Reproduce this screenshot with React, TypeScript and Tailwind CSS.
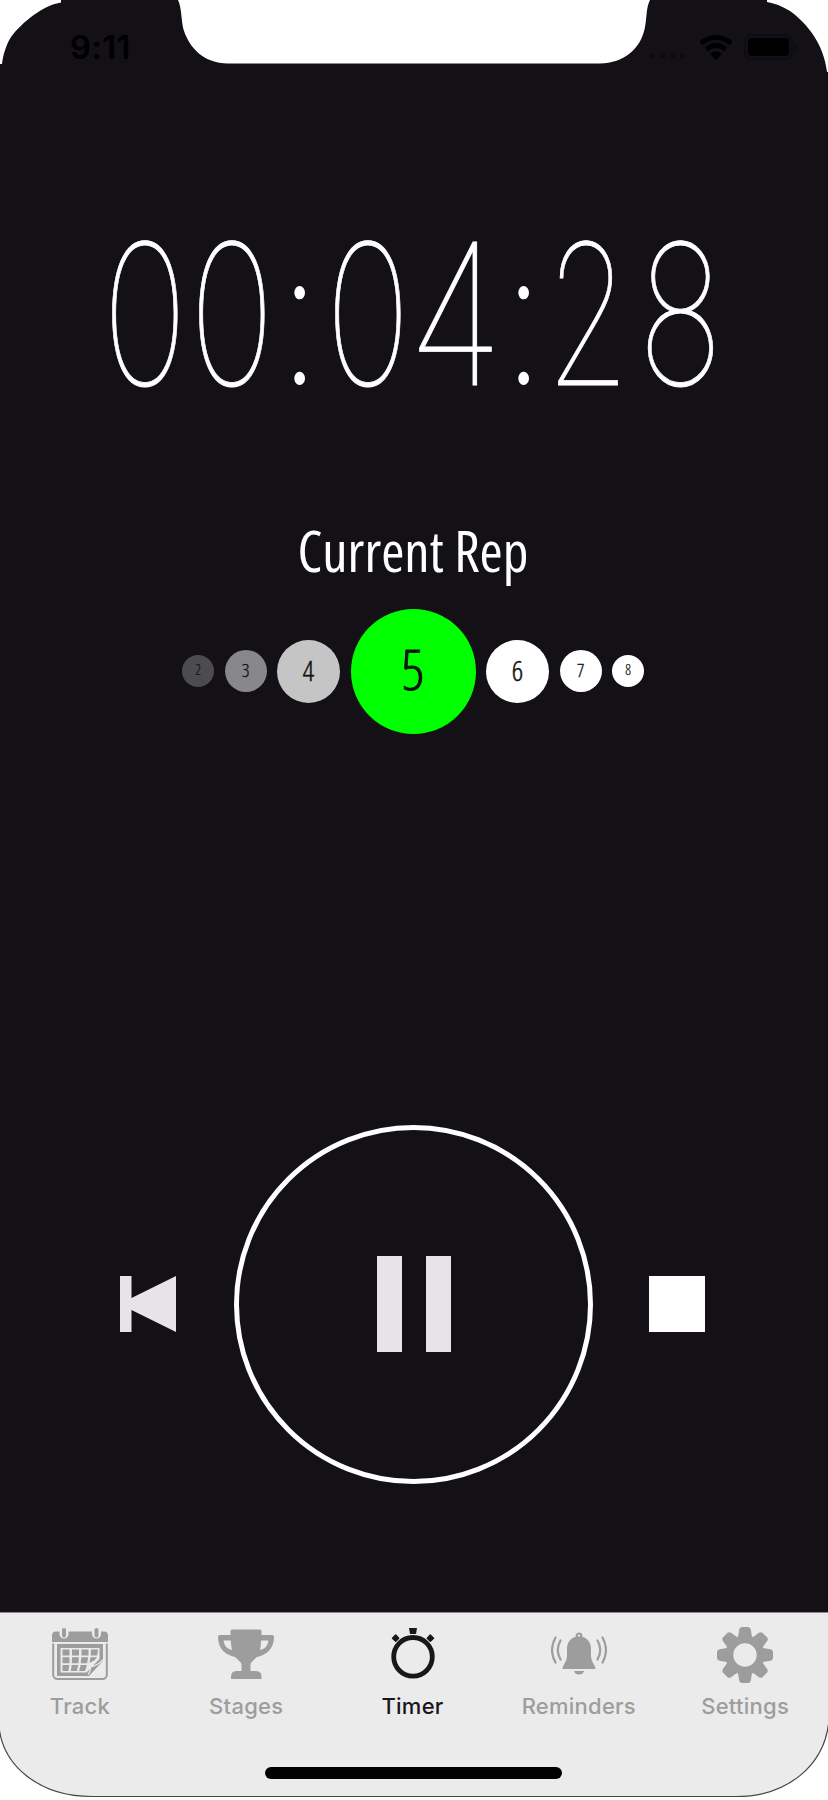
import type { ReactNode } from "react";

const clock: { char: string; slot: string; glyph: string }[] = [
  { char: "0", slot: "w-[87px]", glyph: "scale-x-[0.74]" },
  { char: "0", slot: "w-[87px]", glyph: "scale-x-[0.74]" },
  { char: ":", slot: "w-[49px]", glyph: "scale-x-[0.8]" },
  { char: "0", slot: "w-[87px]", glyph: "scale-x-[0.74]" },
  { char: "4", slot: "w-[87px]", glyph: "scale-x-[0.82]" },
  { char: ":", slot: "w-[51px]", glyph: "scale-x-[0.8]" },
  { char: "2", slot: "w-[76px]", glyph: "scale-x-[0.69]" },
  { char: "8", slot: "w-[98px] pl-[11px]", glyph: "scale-x-[0.73]" },
];

const reps = [
  { n: 2, cls: "size-8 text-[14px] bg-[#4c4b4e]" },
  { n: 3, cls: "size-[42px] text-[19px] bg-[#888789]" },
  { n: 4, cls: "size-[63px] text-[28px] bg-[#c5c5c6]" },
  { n: 5, cls: "size-[125px] text-[56px] bg-[#00ff00]" },
  { n: 6, cls: "size-[63px] text-[28px] bg-white" },
  { n: 7, cls: "size-[42px] text-[19px] bg-white" },
  { n: 8, cls: "size-8 text-[14px] bg-white" },
];

function CalendarIcon() {
  return (
    <svg viewBox="0 0 56 56" className="size-14" fill="currentColor">
      <path d="M0 14V7.500a4 4 0 0 1 4-4H7.500V6a4.500 4.500 0 0 0 9 0V3.500H40V6a4.500 4.500 0 0 0 9 0V3.500H52a4 4 0 0 1 4 4v6.500Z" />
      <rect x="10" y="0" width="4" height="9.500" rx="2" />
      <rect x="42.500" y="0" width="4" height="9.500" rx="2" />
      <path d="M1.200 15.500V46.500a4.500 4.500 0 0 0 4.500 4.500H50.300a4.500 4.500 0 0 0 4.500-4.500V15.500" fill="none" stroke="currentColor" strokeWidth="2" />
      <path fillRule="evenodd" d="M5 16H51V33L37 48H5ZM8.500 20V44.500H34.500L47.500 31V20Z" />
      <path d="M10.500 21.500h7v6h-7zM20 21.500h7v6h-7zM29.500 21.500h7v6h-7zM39 21.500h7l-.8 6h-6.500zM10.500 29.300h7v6h-7zM20 29.300h6.800l-.3 6h-6.700zM29.300 29.300h6.800l-1 6h-6.300zM38.500 29.300h6.500l-2.500 3-5 2.700zM10.500 37h6.800l-.8 6h-6zM19.700 37h6.600l-1.500 6h-6zM28.700 37h6.300l-2 6h-6z" />
      <path d="M36 46.500C39 43.500 38 41 38.500 39C44 37.500 49 35 51 31.500" fill="none" stroke="#ebebeb" strokeWidth="1.300" />
    </svg>
  );
}

function TrophyIcon() {
  return (
    <svg viewBox="0 0 56 56" className="size-14" fill="currentColor">
      <path fillRule="evenodd" d="M14 1.500H42Q43.500 1.500 43.500 3V7H54Q56 7 56 9C56 20 49 27 39 29C35 33 32.500 34 32.500 37V43H38Q43.500 43 43.500 49V51H13V49Q13 43 18 43H23.500V37C23.500 34 21 33 17 29C7 27 0 20 0 9Q0 7 2 7H12.500V3Q12.500 1.500 14 1.500ZM5.500 12.500C6.500 18 9 21 14 22C13.500 20 13 16 12.800 12.500ZM50.500 12.500H43.200C43 16 42.500 20 42 22C47 21 49.500 18 50.500 12.500Z" />
    </svg>
  );
}

function StopwatchIcon() {
  return (
    <svg viewBox="0 0 56 56" className="size-14" fill="currentColor">
      <circle cx="28" cy="28.800" r="19.300" fill="none" stroke="currentColor" strokeWidth="4.800" />
      <path d="M24 0H32L31 6H25Z" />
      <path d="M7.500 10.200L10.700 7L13.700 10.200L10.700 13.200ZM42.300 10.200L45.300 7L48.500 10.200L45.300 13.200Z" stroke="currentColor" strokeWidth="1.500" strokeLinejoin="round" />
    </svg>
  );
}

function BellIcon() {
  return (
    <svg viewBox="0 0 56 56" className="size-14">
      <path fill="currentColor" d="M28 8.500C35 8.500 39.500 13 40 20V28C40 34 44.500 37 44.500 41H11.500C11.500 37 16 34 16 28V20C16.500 13 21 8.500 28 8.500ZM23 43H33Q32 46.500 28 46.500T23 43Z" />
      <g fill="none" stroke="currentColor" strokeWidth="2.200" strokeLinecap="round">
        <circle cx="28" cy="7.800" r="2.300" />
        <path d="M4.500 9.500Q-2.500 22 4.500 34.500M9.500 12.500Q4 22 9.500 31.500M51.500 9.500Q58.500 22 51.500 34.500M46.500 12.500Q52 22 46.500 31.500" />
      </g>
    </svg>
  );
}

function GearIcon() {
  return (
    <svg viewBox="-28 -28 56 56" className="-mt-px mb-px size-14 overflow-visible" fill="currentColor">
      {[0, 45, 90, 135, 180, 225, 270, 315].map((angle) => (
        <path key={angle} transform={`rotate(${angle})`} d="M-7 -18L-5.800 -25.500Q-5.300 -28 -3 -28H3Q5.300 -28 5.800 -25.500L7 -18Z" />
      ))}
      <circle r="15.700" fill="none" stroke="currentColor" strokeWidth="8" />
    </svg>
  );
}

function Tab({ label, active, children }: { label: string; active?: boolean; children: ReactNode }) {
  return (
    <div className={`flex w-[166.300px] shrink-0 flex-col items-center gap-[9px] ${active ? "text-[#18171a]" : "text-[#9d9d9d]"}`}>
      {children}
      <span className="text-[22px] leading-[26px] font-medium tracking-[0.25px]">{label}</span>
    </div>
  );
}

export default function App() {
  return (
    <div className="relative flex h-[1800px] w-[828px] flex-col overflow-hidden bg-white">
      <div className="flex h-[1612px] flex-col bg-[#131116]">
        <header className="flex h-[94px] items-start justify-between pt-[30px] pr-[30px] pl-[70px] text-black">
          <span className="-mt-px font-['Inter','Liberation_Sans',sans-serif] text-[33px] leading-[36px] font-semibold tracking-[0.3px]">9:11</span>
          <div className="flex items-start pt-[4px]">
            <div className="mt-[19px] mr-[14px] flex gap-[5px]">
              {[0, 1, 2, 3].map((i) => (
                <i key={i} className="size-[5px] rounded-full bg-[#0c0b0f]" />
              ))}
            </div>
            <svg viewBox="0 0 34 26" className="mr-[11px] h-[26px] w-[34px]" fill="none" stroke="currentColor" strokeWidth="5">
              <path d="M2 9.500A21.500 21.500 0 0 1 32 9.500M7.500 15.500A13.500 13.500 0 0 1 26.500 15.500" />
              <path d="M17 26L11 20A8.500 8.500 0 0 1 23 20Z" fill="currentColor" stroke="none" />
            </svg>
            <svg viewBox="0 0 54 26" className="h-[26px] w-[54px]">
              <rect x="1" y="1" width="47" height="24" rx="7" fill="none" stroke="#0d0c10" strokeWidth="2" />
              <rect x="4" y="4" width="41" height="18" rx="4" />
              <path d="M50 9Q53 10 53 13T50 17Z" fill="#0d0c10" />
            </svg>
          </div>
        </header>

        <div className="mt-[125px] flex h-[190px] justify-center pr-[3px] font-['Inter',sans-serif] text-[196px] leading-[190px] font-thin text-white">
          {clock.map(({ char, slot, glyph }, i) => (
            <span key={i} className={`flex shrink-0 justify-center ${slot}`}>
              <span
                className={
                  char === ":"
                    ? `-mt-[10px] font-['Lato',sans-serif] text-[204px] ${glyph}`
                    : `[-webkit-text-stroke:0.8px_white] ${glyph}`
                }
              >
                {char}
              </span>
            </span>
          ))}
        </div>

        <section className="mt-[101px] flex flex-col items-center pr-[2px] font-['Open_Sans',sans-serif] [font-stretch:75%]">
          <h1 className="text-[56px] leading-[80px] font-normal text-white">Current Rep</h1>
          <div className="mt-[18.500px] flex items-center gap-[10.500px] text-[#111]">
            {reps.map(({ n, cls }) => (
              <div key={n} className={`flex items-center justify-center rounded-full pb-[0.1em] leading-none font-light [-webkit-text-stroke:0.015em_#111] ${cls}`}>
                {n}
              </div>
            ))}
          </div>
        </section>

        <div className="mt-[391px] flex items-center justify-between pr-[123px] pl-[120px]">
          <svg viewBox="0 0 56 56" className="size-14" fill="#e7e4e7">
            <path d="M0 0H11.500V22L56 0V56L11.500 34V56H0Z" />
          </svg>
          <div className="ml-[2px] flex size-[359px] items-center justify-center gap-[24px] rounded-full border-5 border-white">
            <div className="h-[96px] w-[25px] bg-[#e7e4e7]" />
            <div className="h-[96px] w-[25px] bg-[#e7e4e7]" />
          </div>
          <div className="size-14 bg-white" />
        </div>
      </div>

      <nav className="flex h-[188px] flex-col items-center border-t border-[#8a898b] bg-[#ebebeb]">
        <div className="flex h-[154px] w-full justify-center pt-[15px] pr-[3px] font-['Inter','Liberation_Sans',sans-serif]">
          <Tab label="Track"><CalendarIcon /></Tab>
          <Tab label="Stages"><TrophyIcon /></Tab>
          <Tab label="Timer" active><StopwatchIcon /></Tab>
          <Tab label="Reminders"><BellIcon /></Tab>
          <Tab label="Settings"><GearIcon /></Tab>
        </div>
        <div className="mr-px h-[12px] w-[297px] rounded-full bg-black" />
      </nav>

      <svg viewBox="0 0 828 1800" className="pointer-events-none absolute inset-0 h-full w-full" fill="white">
        <path d="M0 0H61V2.500C44 5 22 22 11 37C6 45 3 55 2 64H0Z" />
        <path d="M767 0H828V72H827C824 45 808 24 790 11C782 6 774 3 767 2Z" />
        <path d="M178 0C182 8 181 22 184 31C190 48 203 63 228 63.500H600C624 63 641 49 645 27C647 16 646 8 650 0Z" />
        <path d="M-1 1727C3 1765 38 1796.500 92 1796.500H736C788 1796.500 825 1765 829 1720V1802H-1Z" stroke="#444" strokeWidth="1.200" />
      </svg>
    </div>
  );
}
